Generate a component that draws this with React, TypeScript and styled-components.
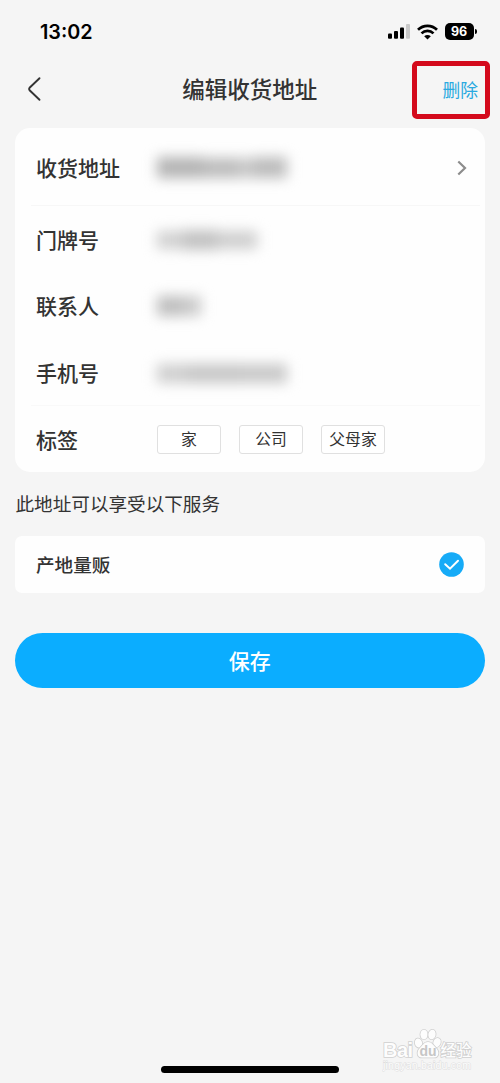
import React from 'react';
import styled, { createGlobalStyle } from 'styled-components';

const GlobalStyle = createGlobalStyle`
  * { box-sizing: border-box; }
  body {
    margin: 0;
    background: #f5f5f5;
    font-family: "Noto Sans CJK SC", sans-serif;
    color: #333;
  }
`;

const Screen = styled.div`
  position: relative;
  height: 1083px;
  padding: 0 15.5px 0 15px;
  overflow: hidden;
  display: flex;
  flex-direction: column;
  background: #f5f5f5;
`;

const StatusBar = styled.div`
  height: 62px;
  padding: 1px 8px 0 25px;
  display: flex;
  align-items: center;
  justify-content: space-between;
`;

const Clock = styled.span`
  font: 600 19.8px/24px Inter, sans-serif;
  color: #000;
`;

const StatusIcons = styled.div`
  display: flex;
  align-items: center;
  gap: 7px;
`;

const NavBar = styled.header`
  height: 66px;
  display: grid;
  grid-template-columns: 80px 1fr 80px;
  align-items: center;
  padding-bottom: 14px;
`;

const BackButton = styled.button`
  border: 0;
  padding: 1px 0 0 12px;
  background: none;
  display: flex;
`;

const Title = styled.h1`
  margin: 0;
  text-align: center;
  font-size: 22.5px;
  line-height: 32px;
  font-weight: 500;
`;

const DeleteButton = styled.button`
  position: relative;
  border: 0;
  padding: 2px 6.5px 0 0;
  background: none;
  text-align: right;
  font: 400 17.8px/26px "Noto Sans CJK SC", sans-serif;
  color: #29a9e0;
`;

const Highlight = styled.span`
  position: absolute;
  top: -13.5px;
  right: -5px;
  width: 78px;
  height: 58px;
  border: 5px solid #d40a1c;
  border-radius: 5px;
`;

const Card = styled.section<{ $radius: number }>`
  background: #fefefe;
  border-radius: ${(p) => p.$radius}px;
`;

const Row = styled.div<{ $height: number; $line?: string }>`
  height: ${(p) => p.$height}px;
  margin: 0 5px 0 16px;
  padding: 0 13px 0 5px;
  display: flex;
  align-items: center;
  border-bottom: 1px solid ${(p) => p.$line ?? 'transparent'};
`;

const Label = styled.span<{ $size?: number }>`
  width: 121px;
  font-size: ${(p) => p.$size ?? 21}px;
  line-height: 30px;
  font-weight: 500;
`;

const Value = styled.span`
  flex: 1;
  display: flex;
  align-items: center;
`;

const Redaction = styled.span`
  display: flex;
  align-items: center;
  padding-top: 2px;
  filter: blur(6.5px);
`;

const Smudge = styled.i<{ $w: number; $h: number; $tone: string }>`
  width: ${(p) => p.$w}px;
  height: ${(p) => p.$h}px;
  background: ${(p) => p.$tone};
`;

const Tags = styled.div`
  display: flex;
  gap: 18px;
  padding-top: 1px;
`;

const Tag = styled.button`
  width: 64px;
  height: 29px;
  padding: 0;
  border: 1px solid #e0e0e0;
  border-radius: 3px;
  background: #fff;
  color: #333;
  font: 400 15.8px/26px "Noto Sans CJK SC", sans-serif;
`;

const Note = styled.p`
  margin: 17px 0 19px 0.5px;
  font-size: 18.6px;
  line-height: 28px;
`;

const SaveButton = styled.button`
  height: 55.5px;
  margin-top: 39.5px;
  padding: 0 0 1px;
  border: 0;
  border-radius: 28px;
  background: #0badff;
  color: #fff;
  font: 500 21px/30px "Noto Sans CJK SC", sans-serif;
`;

const HomeIndicator = styled.div`
  position: absolute;
  left: 161px;
  bottom: 10px;
  width: 178px;
  height: 7px;
  border-radius: 4px;
  background: #000;
`;

const Watermark = styled.div`
  position: absolute;
  left: 382px;
  top: 1027px;
`;

type Part = [number, number, string];

const fields: { label: string; height: number; line?: string; parts: Part[]; arrow?: boolean }[] = [
  { label: '收货地址', height: 78, line: '#f7f7f7', arrow: true, parts: [[46, 21, '#b4b4b4'], [36, 20, '#bcbcbc'], [14, 20, '#c8c8c8'], [34, 21, '#bcbcbc']] },
  { label: '门牌号', height: 66, parts: [[26, 18, '#d0d0d0'], [34, 20, '#c2c2c2'], [40, 18, '#cecece']] },
  { label: '联系人', height: 67, parts: [[26, 20, '#bebebe'], [18, 20, '#cacaca']] },
  { label: '手机号', height: 67, line: '#f9f9f9', parts: [[30, 19, '#cecece'], [54, 19, '#c6c6c6'], [46, 19, '#c8c8c8']] },
];

const Signal = () => (
  <svg width="22" height="15" viewBox="0 0 22 15">
    <rect x="0" y="9.5" width="4" height="5.2" rx="1" />
    <rect x="6" y="7" width="4" height="7.7" rx="1" />
    <rect x="12" y="3.6" width="4" height="11.1" rx="1" />
    <rect x="18" y="0" width="4" height="14.7" rx="1" fill="#c9c9c9" />
  </svg>
);

const Wifi = () => (
  <svg width="21" height="16" viewBox="0 0 21 16">
    <g fill="none" stroke="#000" strokeWidth="2.7">
      <path d="M1 5.8C6.3.5 14.7.5 20 5.8" />
      <path d="M4.5 9.4c3.4-3.3 8.6-3.3 12 0" />
    </g>
    <path d="M10.5 15.6l-3.3-3.3c1.8-1.7 4.8-1.7 6.6 0z" />
  </svg>
);

const BatteryWrap = styled.div`
  display: flex;
  align-items: center;
  gap: 1px;
`;

const BatteryBody = styled.span`
  width: 29px;
  height: 17px;
  border-radius: 5px;
  background: #000;
  color: #fff;
  text-align: center;
  font: 700 12.5px/17px Inter, sans-serif;
`;

const BatteryCap = styled.span`
  width: 2px;
  height: 5px;
  border-radius: 0 2px 2px 0;
  background: #000;
`;

const BaiduMark = () => (
  <svg width="96" height="48" viewBox="0 0 96 48" fill="#fdfdfd" stroke="#d0d0d0" strokeWidth="1.6" paintOrder="stroke">
    <text x="1" y="29.5" fontFamily="Liberation Sans, sans-serif" fontWeight="700" fontSize="20" textLength="30">Bai</text>
    <ellipse cx="36.5" cy="16" rx="3.6" ry="4.6" transform="rotate(-15 36.5 16)" />
    <ellipse cx="42" cy="7.5" rx="3.6" ry="4.8" />
    <ellipse cx="50" cy="7.5" rx="3.6" ry="4.8" transform="rotate(10 50 7.5)" />
    <ellipse cx="55" cy="15.5" rx="3.6" ry="4.6" transform="rotate(20 55 15.5)" />
    <path d="M46 15c4 0 5.500 3.700 8 6 3.400 2.800 3.500 9.500-2 9.500H40c-5.500 0-5.500-6.700-2-9.500 2.500-2.300 4-6 8-6z" />
    <text x="37.500" y="28.500" fontFamily="Liberation Sans, sans-serif" fontWeight="700" fontSize="14" fill="#c6c6c6" stroke="none">du</text>
    <text x="58.500" y="28.500" fontFamily="Noto Sans CJK SC, sans-serif" fontWeight="500" fontSize="15.500">经验</text>
    <text x="1" y="41.500" fontFamily="Liberation Sans, sans-serif" fontSize="10.500" textLength="88" stroke="#dedede" strokeWidth="1">jingyan.baidu.com</text>
  </svg>
);

export default function App() {
  return (
    <>
      <GlobalStyle />
      <Screen>
        <StatusBar>
          <Clock>13:02</Clock>
          <StatusIcons>
            <Signal />
            <Wifi />
            <BatteryWrap>
              <BatteryBody>96</BatteryBody>
              <BatteryCap />
            </BatteryWrap>
          </StatusIcons>
        </StatusBar>
        <NavBar>
          <BackButton aria-label="返回">
            <svg width="15" height="26" viewBox="0 0 15 26" fill="none" stroke="#333" strokeWidth="1.9" strokeLinecap="round">
              <path d="M12.5 2.200L2.600 11.700Q1.500 13 2.600 14.300L12.500 23.800" />
            </svg>
          </BackButton>
          <Title>编辑收货地址</Title>
          <DeleteButton>
            删除
            <Highlight />
          </DeleteButton>
        </NavBar>
        <Card $radius={15}>
          {fields.map((f) => (
            <Row key={f.label} $height={f.height} $line={f.line}>
              <Label>{f.label}</Label>
              <Value>
                <Redaction>
                  {f.parts.map(([w, h, tone], i) => (
                    <Smudge key={i} $w={w} $h={h} $tone={tone} />
                  ))}
                </Redaction>
              </Value>
              {f.arrow && (
                <svg width="10" height="18" viewBox="0 0 10 18" fill="none" stroke="#8c8c8c" strokeWidth="2.200">
                  <path d="M1.300 3.500L8 10l-6.700 6.500" />
                </svg>
              )}
            </Row>
          ))}
          <Row $height={66}>
            <Label>标签</Label>
            <Tags>
              <Tag>家</Tag>
              <Tag>公司</Tag>
              <Tag>父母家</Tag>
            </Tags>
          </Row>
        </Card>
        <Note>此地址可以享受以下服务</Note>
        <Card $radius={7}>
          <Row $height={57}>
            <Label $size={18.6}>产地量贩</Label>
            <Value />
            <svg width="27.500" height="25" viewBox="0 0 27.500 25">
              <circle cx="12.500" cy="12.500" r="12.300" fill="#16abf7" />
              <path d="M6.200 12.200l4.800 4.500 8-8" fill="none" stroke="#fff" strokeWidth="2" strokeLinecap="round" />
            </svg>
          </Row>
        </Card>
        <SaveButton>保存</SaveButton>
        <Watermark>
          <BaiduMark />
        </Watermark>
        <HomeIndicator />
      </Screen>
    </>
  );
}
